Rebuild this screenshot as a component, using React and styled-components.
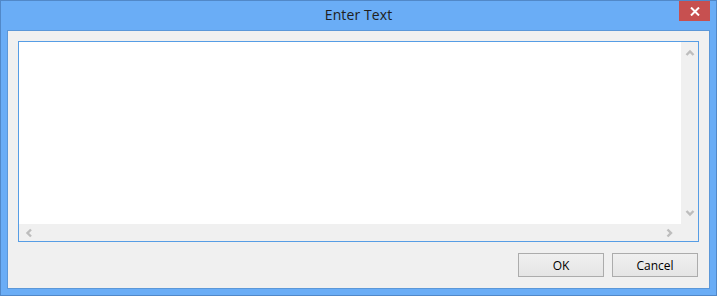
import React from "react";
import styled, { createGlobalStyle } from "styled-components";

const Global = createGlobalStyle`
  html, body { margin: 0; padding: 0; background: #ffffff; }
  body { font-family: "Open Sans", "Noto Sans", sans-serif; }
  * { box-sizing: border-box; }
`;

const Window = styled.div`
  width: 717px;
  height: 296px;
  background: #6aadf6;
  border: 1px solid #5188c8;
  display: flex;
  flex-direction: column;
  padding: 0 6px 6px 6px;
`;

const TitleBar = styled.div`
  height: 29px;
  display: grid;
  grid-template-columns: 1fr auto 1fr;
  align-items: start;
`;

const Title = styled.div`
  grid-column: 2;
  font-size: 14px;
  line-height: 28px;
  color: #202020;
  letter-spacing: 0.1px;
`;

const CloseButton = styled.div`
  grid-column: 3;
  justify-self: end;
  width: 31px;
  height: 20px;
  background: #c75050;
  display: flex;
  align-items: center;
  justify-content: center;
`;

const Client = styled.div`
  flex: 1;
  border: 1px solid #5b97d8;
  background: #f0f0f0;
  padding: 10px 10px 11px 10px;
  display: flex;
  flex-direction: column;
`;

const TextBox = styled.div`
  height: 201px;
  border: 1px solid #569de5;
  background: #ffffff;
  display: grid;
  grid-template-columns: 1fr 17px;
  grid-template-rows: 1fr 17px;
`;

const Area = styled.div`
  background: #ffffff;
`;

const VTrack = styled.div`
  background: #f0f0f0;
  display: flex;
  flex-direction: column;
  justify-content: space-between;
  align-items: center;
  padding: 2px 0 3px 0;
`;

const HTrack = styled.div`
  grid-column: 1 / span 2;
  background: #f0f0f0;
  display: flex;
  justify-content: space-between;
  align-items: center;
  padding: 0 21px 0 2px;
`;

const ArrowBox = styled.div`
  width: 16px;
  height: 16px;
  display: flex;
  align-items: center;
  justify-content: center;
`;

const Footer = styled.div`
  margin-top: 11px;
  margin-right: 1px;
  display: flex;
  justify-content: flex-end;
  gap: 8px;
`;

const Button = styled.div`
  width: 86px;
  height: 24px;
  border: 1px solid #acacac;
  background: linear-gradient(#f0f0f0, #e5e5e5);
  display: flex;
  align-items: center;
  justify-content: center;
  font-size: 12px;
  color: #000000;
`;

const Chevron = ({ dir }) => {
  const paths = {
    up: "M4.5 11 L8 7.5 L11.5 11",
    down: "M4.5 6 L8 9.5 L11.5 6",
    left: "M10 4.5 L6.5 8 L10 11.5",
    right: "M6.5 4.5 L10 8 L6.5 11.5",
  };
  return (
    <svg width="16" height="16" viewBox="0 0 16 16">
      <path d={paths[dir]} fill="none" stroke="#bdbdbd" strokeWidth="2.4" />
    </svg>
  );
};

export default function App() {
  return (
    <>
      <Global />
      <Window>
        <TitleBar>
          <Title>Enter Text</Title>
          <CloseButton>
            <svg width="10" height="9" viewBox="0 0 10 9">
              <path d="M1 0.5 L9 8.5 M9 0.5 L1 8.5" stroke="#ffffff" strokeWidth="2" />
            </svg>
          </CloseButton>
        </TitleBar>
        <Client>
          <TextBox>
            <Area />
            <VTrack>
              <ArrowBox><Chevron dir="up" /></ArrowBox>
              <ArrowBox><Chevron dir="down" /></ArrowBox>
            </VTrack>
            <HTrack>
              <ArrowBox><Chevron dir="left" /></ArrowBox>
              <ArrowBox><Chevron dir="right" /></ArrowBox>
            </HTrack>
          </TextBox>
          <Footer>
            <Button>OK</Button>
            <Button>Cancel</Button>
          </Footer>
        </Client>
      </Window>
    </>
  );
}
